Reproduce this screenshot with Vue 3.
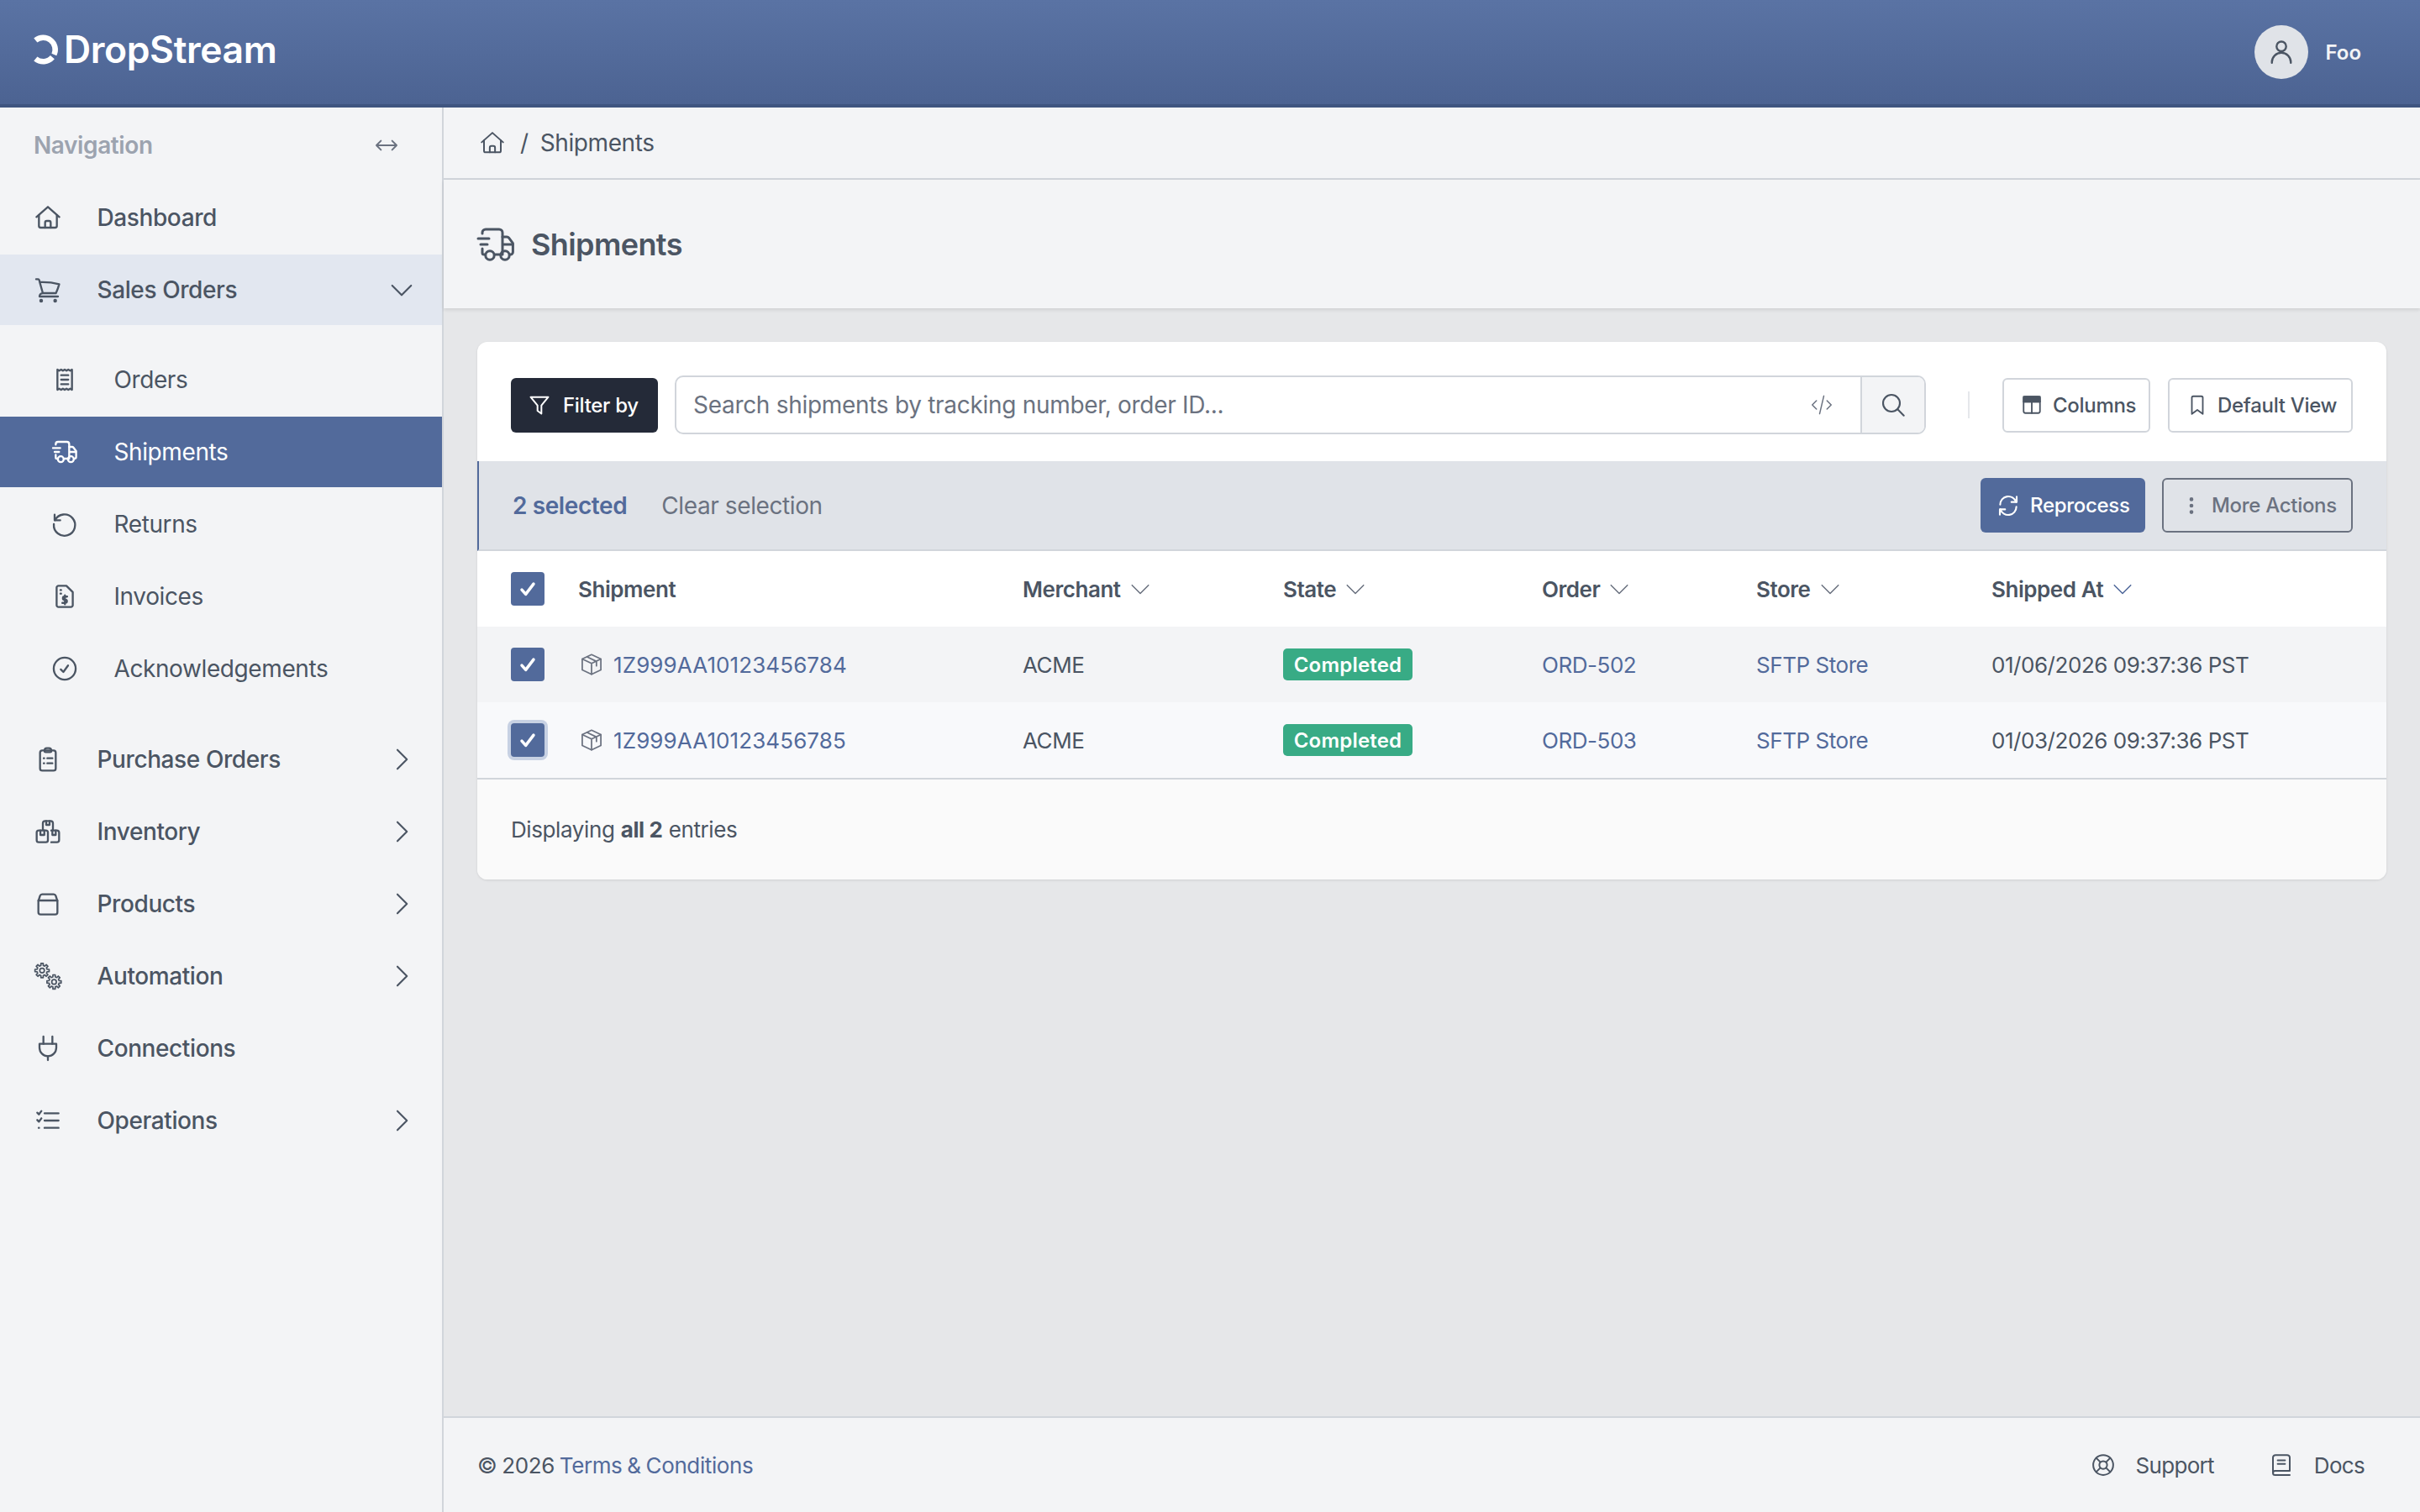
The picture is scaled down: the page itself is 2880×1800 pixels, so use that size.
<script setup>
function gear(cx, cy, R, r, n) {
  const pts = [];
  const step = (Math.PI * 2) / n;
  for (let i = 0; i < n; i++) {
    const a = i * step - Math.PI / 2;
    const w = step * 0.2;
    const p = (rad, ang) => (cx + rad * Math.cos(ang)).toFixed(2) + ' ' + (cy + rad * Math.sin(ang)).toFixed(2);
    pts.push(p(r, a - w * 1.5), p(R, a - w), p(R, a + w), p(r, a + w * 1.5));
  }
  return '<path d="M' + pts.join('L') + 'Z"/><circle cx="' + cx + '" cy="' + cy + '" r="' + (r * 0.45).toFixed(2) + '"/>';
}

const icons = {
  home: '<path d="M1.800 11.500 12 2.500l10.200 9"/><path d="M4 9.800V19.500a1.500 1.500 0 0 0 1.500 1.500h13a1.500 1.500 0 0 0 1.500-1.500V9.800"/><path d="M9.500 21v-4.500a1.500 1.500 0 0 1 1.500-1.500h2a1.500 1.500 0 0 1 1.500 1.500V21"/>',
  cart: '<path d="M1.500 2.500h1.700c.51 0 .955.343 1.087.835l.45 1.900M7.500 15a3 3 0 0 0-3 3h16.500m-13.500-3h11.700c1.121-2.500 2.100-5.200 2.900-8a60.114 60.114 0 0 0-17.100-1.800M7.500 15 4.700 5.200"/><circle cx="6" cy="21.700" r=".8"/><circle cx="18.500" cy="21.700" r=".8"/>',
  receipt: '<path d="M5.500 3 7.100 4l1.700-1 1.600 1L12 3l1.600 1 1.600-1 1.700 1 1.600-1v18l-1.600-1-1.700 1-1.600-1-1.600 1-1.600-1-1.600 1-1.700-1-1.600 1z"/><path d="M8.800 8h6.400M8.800 12h6.400M8.800 16h6.400"/>',
  truck: '<path d="M1.500 8.500h6.500M3 12h4"/><path d="M4 5.500V5a2 2 0 0 1 2-2h8a2 2 0 0 1 2 2v13h-4.500"/><path d="M4 14.500V17a1 1 0 0 0 1 1h.8"/><path d="M16 7.500h2.600a1.500 1.500 0 0 1 1.200.6l2.400 3.200v5.200a1.500 1.500 0 0 1-1.500 1.500h-.2"/><path d="M16.500 12h5.500"/><circle cx="8.500" cy="18.500" r="2.600"/><circle cx="17.500" cy="18.500" r="2.600"/>',
  undo: '<path d="M3 3.500v5h5"/><path d="M3.300 8.500A9.500 9.500 0 1 1 2.300 12"/>',
  invoice: '<path d="M13.500 2.500H6.500a1.700 1.700 0 0 0-1.700 1.700v15.600a1.700 1.700 0 0 0 1.700 1.700h11a1.700 1.700 0 0 0 1.700-1.700V8.200z"/><path d="M8.200 6.300h.6M8.200 9.500h.6"/><path d="M14.200 12.200h-2.400a1.300 1.300 0 0 0 0 2.800h.8a1.300 1.300 0 0 1 0 2.800H9.900M12.200 11v8"/>',
  check: '<circle cx="12" cy="12" r="9.800"/><path d="m8.500 12.700 2.300 2.300 4.200-5.800"/>',
  clip: '<rect x="5" y="4" width="14" height="18" rx="2"/><path d="M9 4.500V4a2 2 0 0 1 2-2h2a2 2 0 0 1 2 2v.5a1 1 0 0 1-1 1h-4a1 1 0 0 1-1-1z"/><path d="M8.300 11h.4M8.300 15.500h.4M11.500 11H16M11.500 15.500H16"/>',
  inventory: '<path d="M7.500 10.500V4.500A2 2 0 0 1 9.500 2.500h5a2 2 0 0 1 2 2v6"/><path d="M10.500 2.500V6h3V2.500"/><rect x="2" y="11" width="10" height="10.500" rx="1.800"/><path d="M5.300 11v4h3.500v-4"/><path d="M15 11h5a2 2 0 0 1 2 2v6.500a2 2 0 0 1-2 2h-5"/><path d="M16 11v4h3v-4"/>',
  box: '<path d="M3.500 9.500 5 4.800A2 2 0 0 1 7 3.500h10a2 2 0 0 1 2 1.300l1.500 4.700v10a2 2 0 0 1-2 2h-13a2 2 0 0 1-2-2z"/><path d="M3.500 9h17"/>',
  gears: gear(6.8, 7, 6.400, 4.600, 8) + gear(17.500, 17.200, 6.400, 4.600, 8),
  plug: '<path d="M8 1.500V8M16 1.500V8"/><path d="M4.500 8h15v3.500a7.500 7.500 0 0 1-15 0z"/><path d="M12 19v3.500"/>',
  ops: '<path d="M9 5.500h12.500M9 12h12.500M9 18.500h12.500"/><path d="m2.500 5 1.500 1.500L6.200 3.500M2.500 11.500 4 13l2.200-3"/><path d="M3.800 18.500h.3"/>',
  right: '<path d="m8 3 9 9-9 9"/>',
  down: '<path d="m3 8 9 9 9-9"/>',
  arrows: '<path d="M3 12h18M7 8l-4 4 4 4M17 8l4 4-4 4"/>',
  filter: '<path d="M3 4h18l-7 8.500V21l-4-3v-5.500z"/>',
  code: '<path d="M7 8l-4 4 4 4M17 8l4 4-4 4M14 3.500 10 20.500"/>',
  search: '<circle cx="10.500" cy="10.500" r="7.500"/><path d="m16 16 5.500 5.500"/>',
  columns: '<rect x="3" y="3" width="18" height="18" rx="2"/><path d="M3 8.500h18M12 8.500V21"/><path d="M3 3h18v5.500H3z" fill="currentColor"/>',
  bookmark: '<path d="M6 4a1.500 1.500 0 0 1 1.500-1.500h9A1.500 1.500 0 0 1 18 4v18l-6-4.500L6 22z"/>',
  refresh: '<path d="M20 3.500V8.500h-5"/><path d="M4 20.500V15.500h5"/><path d="M4.300 11a7.800 7.800 0 0 1 15.200-2.500"/><path d="M19.700 13a7.800 7.800 0 0 1-15.200 2.500"/>',
  dots: '<circle cx="12" cy="5" r="1.300" fill="currentColor"/><circle cx="12" cy="12" r="1.300" fill="currentColor"/><circle cx="12" cy="19" r="1.300" fill="currentColor"/>',
  cube: '<path d="M12 2 21.500 6.500v11L12 22 2.500 17.500v-11z"/><path d="M2.500 6.500l9.500 4.500 9.500-4.500M12 11v11M7.500 4.300l9.500 4.600v4.500"/>',
  user: '<circle cx="12" cy="7.500" r="3.800"/><path d="M4.500 20.500v-.5a7.500 7.500 0 0 1 15 0v.5"/>',
  support: '<circle cx="12" cy="12" r="9.500"/><circle cx="12" cy="12" r="3.700"/><path d="m5.300 5.300 4 4M14.700 14.700l4 4M18.700 5.300l-4 4M9.300 14.700l-4 4"/>',
  book: '<path d="M4 19V5a2.500 2.500 0 0 1 2.500-2.500h11A2.500 2.500 0 0 1 20 5v12.500H6a2 2 0 0 0-2 2A2 2 0 0 0 6 21.500h14"/><path d="M8.500 7.500h7M8.500 11h7"/>'
};

const subItems = [
  { label: 'Orders', icon: 'receipt' },
  { label: 'Shipments', icon: 'truck', active: true },
  { label: 'Returns', icon: 'undo' },
  { label: 'Invoices', icon: 'invoice' },
  { label: 'Acknowledgements', icon: 'check' }
];
const lowerItems = [
  { label: 'Purchase Orders', icon: 'clip', more: true },
  { label: 'Inventory', icon: 'inventory', more: true },
  { label: 'Products', icon: 'box', more: true },
  { label: 'Automation', icon: 'gears', more: true },
  { label: 'Connections', icon: 'plug' },
  { label: 'Operations', icon: 'ops', more: true }
];
const sortCols = ['Merchant', 'State', 'Order', 'Store', 'Shipped At'];
const rows = [
  { id: '1Z999AA10123456784', order: 'ORD-502', at: '01/06/2026 09:37:36 PST' },
  { id: '1Z999AA10123456785', order: 'ORD-503', at: '01/03/2026 09:37:36 PST', focus: true }
];
</script>

<template>
  <div class="app">
    <header class="topbar">
      <div class="logo">
        <svg class="logo-mark" viewBox="0 0 30 36" fill="none" stroke="currentColor" stroke-width="6.500">
          <path d="M2.340 7.100A14.250 14.250 0 0 1 24.400 24"/>
          <path d="M22.400 27.200A14.250 14.250 0 0 1 2.340 28.900"/>
        </svg>
        <span class="logo-text">DropStream</span>
      </div>
      <div class="user">
        <span class="avatar"><svg class="ic user-ic" viewBox="0 0 24 24" v-html="icons.user"></svg></span>
        <span class="user-name">Foo</span>
      </div>
    </header>

    <div class="body">
      <aside class="sidebar">
        <div class="nav-head">
          <span>Navigation</span>
          <span class="toggle"><svg class="ic arrows-ic" viewBox="0 0 24 24" v-html="icons.arrows"></svg></span>
        </div>
        <nav class="nav">
          <a class="item">
            <span class="slot"><svg class="ic" viewBox="0 0 24 24" v-html="icons.home"></svg></span>
            <span class="label">Dashboard</span>
          </a>
          <a class="item open">
            <span class="slot"><svg class="ic" viewBox="0 0 24 24" v-html="icons.cart"></svg></span>
            <span class="label">Sales Orders</span>
            <svg class="ic chev" viewBox="0 0 24 24" v-html="icons.down"></svg>
          </a>
          <div class="sub">
            <a v-for="s in subItems" :key="s.label" class="item subitem" :class="{ active: s.active }">
              <span class="slot"><svg class="ic" viewBox="0 0 24 24" v-html="icons[s.icon]"></svg></span>
              <span class="label">{{ s.label }}</span>
            </a>
          </div>
          <a v-for="l in lowerItems" :key="l.label" class="item">
            <span class="slot"><svg class="ic" :class="{ gears: l.icon === 'gears' }" viewBox="0 0 24 24" v-html="icons[l.icon]"></svg></span>
            <span class="label">{{ l.label }}</span>
            <svg v-if="l.more" class="ic chev" viewBox="0 0 24 24" v-html="icons.right"></svg>
          </a>
        </nav>
      </aside>

      <main class="main">
        <div class="crumbs">
          <svg class="ic crumb-home" viewBox="0 0 24 24" v-html="icons.home"></svg>
          <span class="slash">/</span>
          <span>Shipments</span>
        </div>
        <div class="title">
          <svg class="ic title-ic" viewBox="0 0 24 24" v-html="icons.truck"></svg>
          <h1>Shipments</h1>
        </div>

        <section class="content">
          <div class="card">
            <div class="toolbar">
              <button class="filter"><svg class="ic filter-ic" viewBox="0 0 24 24" v-html="icons.filter"></svg>Filter by</button>
              <div class="search">
                <span class="placeholder">Search shipments by tracking number, order ID...</span>
                <svg class="ic code-ic" viewBox="0 0 24 24" v-html="icons.code"></svg>
                <span class="search-btn"><svg class="ic search-ic" viewBox="0 0 24 24" v-html="icons.search"></svg></span>
              </div>
              <span class="vr"></span>
              <button class="ghost columns"><svg class="ic btn-ic" viewBox="0 0 24 24" v-html="icons.columns"></svg>Columns</button>
              <button class="ghost view"><svg class="ic btn-ic" viewBox="0 0 24 24" v-html="icons.bookmark"></svg>Default View</button>
            </div>

            <div class="selbar">
              <span class="sel-count">2 selected</span>
              <span class="sel-clear">Clear selection</span>
              <button class="reprocess"><svg class="ic refresh-ic" viewBox="0 0 24 24" v-html="icons.refresh"></svg>Reprocess</button>
              <button class="more"><svg class="ic btn-ic" viewBox="0 0 24 24" v-html="icons.dots"></svg>More Actions</button>
            </div>

            <div class="grid head">
              <span class="cell-box"><span class="cb"><svg viewBox="0 0 24 24" class="cb-ic"><path d="m6 13 4 4.500L18 7"/></svg></span></span>
              <span class="th">Shipment</span>
              <span v-for="c in sortCols" :key="c" class="th">
                {{ c }}
                <svg class="ic sort" :class="{ current: c === 'Shipped At' }" viewBox="0 0 24 24" v-html="icons.down"></svg>
              </span>
            </div>
            <div v-for="r in rows" :key="r.id" class="grid row" :class="{ second: r.focus }">
              <span class="cell-box"><span class="cb" :class="{ ring: r.focus }"><svg viewBox="0 0 24 24" class="cb-ic"><path d="m6 13 4 4.500L18 7"/></svg></span></span>
              <span class="ship"><svg class="ic cube" viewBox="0 0 24 24" v-html="icons.cube"></svg><a class="link id">{{ r.id }}</a></span>
              <span>ACME</span>
              <span><span class="badge">Completed</span></span>
              <a class="link">{{ r.order }}</a>
              <a class="link">SFTP Store</a>
              <span>{{ r.at }}</span>
            </div>
            <div class="card-foot">Displaying <b>all 2</b> entries</div>
          </div>
        </section>

        <footer class="footer">
          <span>© 2026 <a class="link">Terms &amp; Conditions</a></span>
          <span class="foot-links">
            <span class="foot-link"><svg class="ic foot-ic" viewBox="0 0 24 24" v-html="icons.support"></svg>Support</span>
            <span class="foot-link"><svg class="ic foot-ic" viewBox="0 0 24 24" v-html="icons.book"></svg>Docs</span>
          </span>
        </footer>
      </main>
    </div>
  </div>
</template>

<style>
html, body { margin: 0; padding: 0; }
</style>

<style scoped>
.app { width: 2880px; height: 1800px; display: flex; flex-direction: column; font-family: Inter, "Liberation Sans", sans-serif; color: #4b5563; font-size: 28px; letter-spacing: -0.4px; overflow: hidden; }
button { font-family: inherit; cursor: pointer; white-space: nowrap; letter-spacing: -0.3px; }
.ic { width: 32px; height: 32px; fill: none; stroke: currentColor; stroke-width: 1.75; stroke-linecap: round; stroke-linejoin: round; flex: none; display: block; overflow: visible; }

.topbar { height: 128px; box-sizing: border-box; border-bottom: 4px solid #3f5580; background: linear-gradient(#5a73a4, #4c6392); display: flex; align-items: center; justify-content: space-between; padding: 0 70px 0 40px; flex: none; }
.logo { display: flex; align-items: center; gap: 6px; color: #fff; margin-top: -7px; }
.logo-mark { width: 30px; height: 36px; flex: none; }
.logo-text { font-size: 44.5px; font-weight: 600; letter-spacing: -0.4px; line-height: 52px; }
.user { display: flex; align-items: center; gap: 20px; }
.avatar { width: 64px; height: 64px; border-radius: 50%; background: #e0e3e8; display: flex; align-items: center; justify-content: center; color: #4b5563; }
.user-ic { width: 36px; height: 36px; stroke-width: 1.6; }
.user-name { color: #f3f4f6; font-size: 24px; font-weight: 600; letter-spacing: 0; }

.body { flex: 1; display: flex; min-height: 0; }
.sidebar { width: 528px; box-sizing: border-box; flex: none; background: #f3f4f6; border-right: 2px solid #d1d5db; }
.nav-head { height: 89px; box-sizing: border-box; display: flex; align-items: center; justify-content: space-between; padding: 0 40px 0 40px; color: #9ca3af; font-weight: 600; font-size: 28px; }
.toggle { width: 52px; height: 52px; border-radius: 50%; display: flex; align-items: center; justify-content: center; color: #6b7280; }
.arrows-ic { width: 32px; height: 32px; stroke-width: 1.5; }
.nav { display: flex; flex-direction: column; gap: 2px; }
.item { height: 84px; display: flex; align-items: center; font-weight: 500; color: #4b5563; padding-left: 40px; padding-right: 33px; }
.slot { width: 34px; display: flex; justify-content: center; flex: none; margin-right: 41.5px; }
.label { flex: 1; }
.open { background: #e2e7f0; }
.sub { display: flex; flex-direction: column; gap: 2px; padding: 21px 0 22px; }
.subitem { font-weight: 400; padding-left: 60px; }
.active { background: #526a9b; color: #fff; }
.chev { width: 30px; height: 30px; stroke-width: 1.7; }
.gears { stroke-width: 1.3; }

.main { flex: 1; min-width: 0; display: flex; flex-direction: column; background: #e6e7e9; }
.crumbs { height: 84px; border-bottom: 2px solid #d1d5db; background: #f3f4f6; display: flex; align-items: center; padding-left: 40px; flex: none; }
.crumb-home { width: 30px; height: 30px; margin-left: 3px; stroke-width: 1.6; }
.slash { margin: 0 14px 0 18px; }
.title { height: 153px; background: #f3f4f6; box-shadow: 0 2px 4px rgba(0,0,0,.1); display: flex; align-items: center; gap: 18px; padding-left: 38px; flex: none; position: relative; }
.title-ic { width: 48px; height: 48px; stroke-width: 1.5; }
.title h1 { margin: 0; font-size: 36px; font-weight: 600; color: #4b5563; letter-spacing: -0.6px; }

.content { flex: 1; padding: 40px; min-height: 0; }
.card { background: #fff; border-radius: 12px; box-shadow: 0 1px 3px rgba(0,0,0,.1); overflow: hidden; }
.toolbar { display: flex; align-items: center; padding: 40px 40px 32px; }
.filter { width: 175px; height: 65px; background: #242a38; color: #fff; border: 0; border-radius: 6px; display: flex; align-items: center; font-size: 24px; font-weight: 500; padding: 0 0 0 20px; gap: 14px; }
.filter-ic { width: 28px; height: 28px; stroke-width: 1.7; }
.btn-ic { width: 26px; height: 26px; stroke-width: 1.7; }
.search { flex: 1; height: 70px; box-sizing: border-box; margin-left: 20px; border: 2px solid #d1d5db; border-radius: 10px; display: flex; align-items: center; padding-left: 20px; color: #6b7280; overflow: hidden; letter-spacing: -0.3px; }
.placeholder { flex: 1; }
.code-ic { width: 30px; height: 30px; stroke-width: 1.2; margin-right: 31px; }
.search-btn { width: 74px; height: 100%; background: #f3f4f6; border-left: 2px solid #d1d5db; display: flex; align-items: center; justify-content: center; color: #4b5563; }
.search-ic { width: 32px; height: 32px; stroke-width: 1.6; }
.vr { width: 2px; height: 32px; background: #e5e7eb; margin: 0 39px 0 50px; }
.ghost { height: 65px; box-sizing: border-box; background: #fff; border: 2px solid #d1d5db; border-radius: 6px; display: flex; align-items: center; color: #4b5563; font-size: 24px; font-weight: 500; }
.columns { width: 176px; padding: 0 0 0 20px; gap: 12px; margin-right: 21px; }
.view { width: 220px; padding: 0 0 0 20px; gap: 11px; }

.selbar { height: 107px; box-sizing: border-box; background: #e0e3e8; border-bottom: 2px solid #d1d5db; border-left: 2px solid #526a9b; display: flex; align-items: center; padding: 0 40px; }
.sel-count { color: #526a9b; font-weight: 600; }
.sel-clear { color: #6b7280; margin-left: 41px; flex: 1; }
.reprocess { width: 196px; height: 65px; background: #526a9b; color: #fff; border: 0; border-radius: 6px; display: flex; align-items: center; font-size: 24px; font-weight: 500; padding: 0 0 0 18px; gap: 11px; }
.refresh-ic { width: 30px; height: 30px; stroke-width: 1.7; }
.more { width: 227px; height: 65px; box-sizing: border-box; margin-left: 20px; background: transparent; border: 2px solid #6b7280; border-radius: 6px; color: #6b7280; display: flex; align-items: center; font-size: 24px; font-weight: 500; padding: 0 0 0 20px; gap: 11px; }

.grid { display: grid; grid-template-columns: 120px 529px 310px 308px 255px 280px 1fr; align-items: center; font-size: 26px; letter-spacing: -0.45px; }
.head { height: 90px; background: #fff; font-weight: 600; }
.row { height: 90px; background: #f3f4f6; }
.second { background: #f8f9fb; border-bottom: 2px solid #d1d5db; height: 92px; box-sizing: border-box; }
.cell-box { padding-left: 40px; display: flex; }
.cb { width: 40px; height: 40px; background: #526a9b; border-radius: 4px; display: flex; align-items: center; justify-content: center; }
.cb-ic { width: 28px; height: 28px; fill: none; stroke: #fff; stroke-width: 3; stroke-linecap: round; stroke-linejoin: round; }
.ring { box-shadow: 0 0 0 4px #c7d1e3; }
.th { display: flex; align-items: center; gap: 10px; }
.sort { width: 26px; height: 26px; stroke-width: 1.4; color: #6b7280; }
.sort.current { color: #526a9b; }
.ship { display: flex; align-items: center; gap: 12px; padding-left: 2px; }
.cube { width: 28px; height: 28px; color: #6b7280; stroke-width: 1.5; }
.link { color: #526a9b; }
.id { letter-spacing: 0.1px; }
.badge { display: inline-flex; width: 154px; height: 38px; align-items: center; justify-content: center; background: #38ab85; color: #fff; border-radius: 5px; font-size: 24px; font-weight: 600; letter-spacing: 0.2px; }
.card-foot { height: 119px; box-sizing: border-box; background: #fafafa; display: flex; align-items: center; gap: 0.28em; padding-left: 40px; font-size: 26px; }
.card-foot b { font-weight: 700; }

.footer { height: 114px; box-sizing: border-box; flex: none; background: #f3f4f6; border-top: 2px solid #d1d5db; display: flex; align-items: center; justify-content: space-between; padding: 0 66px 0 40px; font-size: 26px; word-spacing: -1px; }
.foot-links { display: flex; gap: 65px; letter-spacing: -0.7px; }
.foot-link { display: flex; align-items: center; gap: 24px; }
.foot-ic { width: 30px; height: 30px; stroke-width: 1.6; }
</style>
